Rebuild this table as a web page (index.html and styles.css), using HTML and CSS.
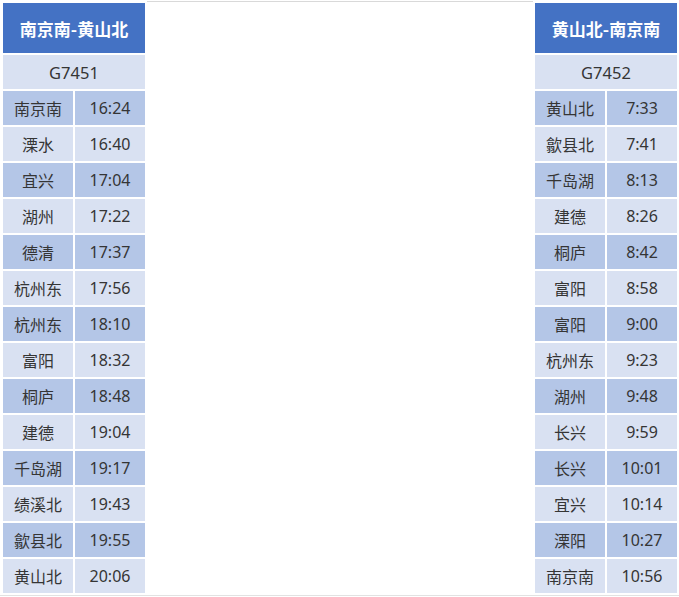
FILE: index.html
```html
<!DOCTYPE html>
<html lang="zh">
<head>
<meta charset="utf-8">
<link rel="stylesheet" href="styles.css">
</head>
<body>
<div class="page">
  <table class="tt">
    <tr><th colspan="2">南京南-黄山北</th></tr>
    <tr class="train"><td colspan="2">G7451</td></tr>
    <tr class="d"><td>南京南</td><td>16:24</td></tr>
    <tr class="l"><td>溧水</td><td>16:40</td></tr>
    <tr class="d"><td>宜兴</td><td>17:04</td></tr>
    <tr class="l"><td>湖州</td><td>17:22</td></tr>
    <tr class="d"><td>德清</td><td>17:37</td></tr>
    <tr class="l"><td>杭州东</td><td>17:56</td></tr>
    <tr class="d"><td>杭州东</td><td>18:10</td></tr>
    <tr class="l"><td>富阳</td><td>18:32</td></tr>
    <tr class="d"><td>桐庐</td><td>18:48</td></tr>
    <tr class="l"><td>建德</td><td>19:04</td></tr>
    <tr class="d"><td>千岛湖</td><td>19:17</td></tr>
    <tr class="l"><td>绩溪北</td><td>19:43</td></tr>
    <tr class="d"><td>歙县北</td><td>19:55</td></tr>
    <tr class="l"><td>黄山北</td><td>20:06</td></tr>
  </table>
  <div class="spacer"></div>
  <table class="tt">
    <tr><th colspan="2">黄山北-南京南</th></tr>
    <tr class="train"><td colspan="2">G7452</td></tr>
    <tr class="d"><td>黄山北</td><td>7:33</td></tr>
    <tr class="l"><td>歙县北</td><td>7:41</td></tr>
    <tr class="d"><td>千岛湖</td><td>8:13</td></tr>
    <tr class="l"><td>建德</td><td>8:26</td></tr>
    <tr class="d"><td>桐庐</td><td>8:42</td></tr>
    <tr class="l"><td>富阳</td><td>8:58</td></tr>
    <tr class="d"><td>富阳</td><td>9:00</td></tr>
    <tr class="l"><td>杭州东</td><td>9:23</td></tr>
    <tr class="d"><td>湖州</td><td>9:48</td></tr>
    <tr class="l"><td>长兴</td><td>9:59</td></tr>
    <tr class="d"><td>长兴</td><td>10:01</td></tr>
    <tr class="l"><td>宜兴</td><td>10:14</td></tr>
    <tr class="d"><td>溧阳</td><td>10:27</td></tr>
    <tr class="l"><td>南京南</td><td>10:56</td></tr>
  </table>
</div>
<div class="bottom-line"></div>
</body>
</html>
```

FILE: styles.css
```css
html, body {
  margin: 0;
  padding: 0;
  background: #ffffff;
}
body {
  font-family: "Noto Sans", "Noto Sans CJK SC", sans-serif;
  color: #353535;
  width: 679px;
}
.page {
  display: flex;
  align-items: flex-start;
  padding-top: 1px;
  padding-left: 1px;
}
.spacer {
  flex: 1;
  border-top: 1px solid #d9d9d9;
}
.tt {
  border-collapse: separate;
  border-spacing: 2px;
  background: #ffffff;
  flex: none;
}
.tt th {
  width: 142px;
  height: 50px;
  padding: 0;
  background: #4472c4;
  color: #ffffff;
  font-family: "Noto Sans CJK SC", sans-serif;
  font-weight: 700;
  font-size: 17px;
  text-align: center;
  vertical-align: middle;
}
.tt td {
  width: 70px;
  height: 34px;
  padding: 0;
  text-align: center;
  vertical-align: middle;
  font-size: 16px;
  font-family: "Noto Sans", "Noto Sans CJK SC", sans-serif;
}
.tt td:first-child {
  font-family: "Noto Sans CJK SC", sans-serif;
}
.tt .train td {
  font-family: "Noto Sans", sans-serif;
  font-size: 16.5px;
  background: #d9e1f2;
}
.d td { background: #b4c6e7; }
.l td { background: #d9e1f2; }
.bottom-line {
  height: 1px;
  background: #e2e2e2;
  width: 679px;
}
```
